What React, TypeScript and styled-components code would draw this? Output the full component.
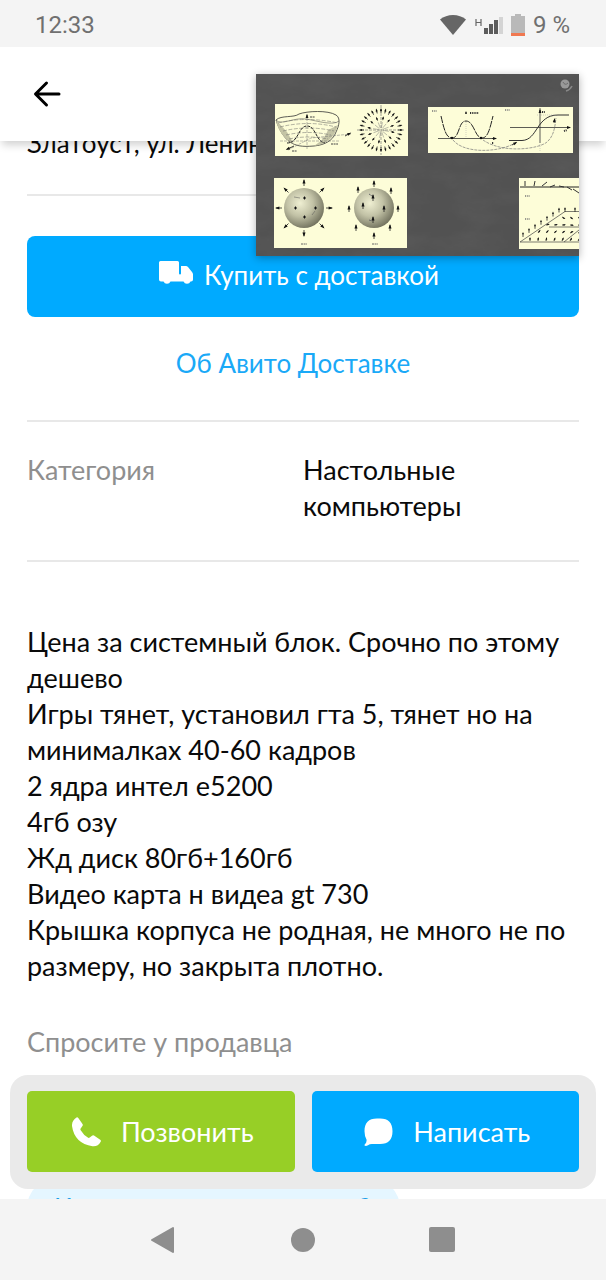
import React from "react";
import styled, { createGlobalStyle } from "styled-components";

const BLUE = "#00aaff";
const GREEN = "#97cf26";

const GlobalStyle = createGlobalStyle`
  *, *::before, *::after { box-sizing: border-box; }
  body {
    margin: 0;
    background: #fff;
    color: #0a0a0a;
    font: 400 27px/36px Lato, "Open Sans", sans-serif;
  }
  h2, p, dl, dt, dd { margin: 0; font: inherit; }
  button { border: 0; padding: 0; background: none; font: inherit; color: inherit; cursor: pointer; }
  svg { display: block; flex: none; }
`;

const Screen = styled.div`
  position: relative;
  display: flex;
  flex-direction: column;
  height: 100vh;
  overflow: hidden;
`;

const StatusBar = styled.div`
  display: flex;
  align-items: center;
  justify-content: space-between;
  height: 47px;
  flex: none;
  padding: 2px 36px 0 35px;
  background: #f4f4f4;
  color: #707070;
  font: 400 24px/28px Roboto, sans-serif;
`;

const StatusIcons = styled.div`
  display: flex;
  align-items: center;
  gap: 8px;
`;

const Header = styled.header`
  position: relative;
  z-index: 1;
  display: flex;
  align-items: center;
  height: 94px;
  flex: none;
  padding: 0 33px;
  background: #fff;
  box-shadow: 0 6px 8px -2px rgba(0, 0, 0, 0.18);
`;

const Main = styled.main`
  position: relative;
  flex: 1;
  min-height: 0;
  overflow: hidden;
`;

const Listing = styled.div`
  display: flex;
  flex-direction: column;
  margin-top: -16px;
  padding: 0 27px;
`;

const Section = styled.section<{ $top?: number; $bottom?: number }>`
  display: flex;
  flex-direction: column;
  padding: ${(p) => p.$top ?? 0}px 0 ${(p) => p.$bottom ?? 0}px;
  border-bottom: 2px solid #e8e8e8;
  &:last-child { border-bottom: 0; }
`;

const Address = styled.p`
  && { font-size: 26px; }
`;

const DeliveryButton = styled.button`
  display: flex;
  align-items: center;
  justify-content: center;
  gap: 11px;
  height: 81px;
  padding: 0 8px 4px 0;
  border-radius: 8px;
  background: ${BLUE};
  color: #fff;
  && { font-size: 26px; }
`;

const TruckIcon = styled.svg`
  margin-bottom: 3px;
`;

const DeliveryLink = styled.a`
  align-self: center;
  margin: 28px 20px 0 0;
  color: #1aa9f7;
  font-size: 26px;
  text-decoration: none;
`;

const Specs = styled.dl`
  display: grid;
  grid-template-columns: 1fr 1fr;
`;

const SpecName = styled.dt`
  color: #8f8f8f;
`;

const SpecValue = styled.dd`
  max-width: 200px;
`;

const Description = styled.p`
  white-space: pre-line;
`;

const AskTitle = styled.h2`
  margin-top: 40px;
  color: #8f8f8f;
`;

const QuestionChip = styled.button`
  align-self: flex-start;
  margin-top: 118px;
  height: 60px;
  padding: 0 29px 0 27px;
  border-radius: 30px;
  background: #e5f6ff;
  color: #1a9fe8;
  white-space: nowrap;
  && { font-size: 26px; }
`;

const ActionBar = styled.div`
  position: absolute;
  left: 10px;
  right: 10px;
  bottom: 10px;
  display: flex;
  gap: 17px;
  padding: 16px 17px 17px;
  border-radius: 18px;
  background: #eaeaea;
`;

const ActionButton = styled.button<{ $color: string }>`
  flex: 1;
  display: flex;
  align-items: center;
  justify-content: center;
  gap: 20px;
  height: 81px;
  padding-left: 4px;
  border-radius: 5px;
  background: ${(p) => p.$color};
  color: #fff;
`;

const NavBar = styled.nav`
  display: flex;
  align-items: center;
  justify-content: center;
  gap: 113px;
  height: 81px;
  flex: none;
  background: #f4f4f4;
`;

const FloatingPlayer = styled.div`
  position: absolute;
  z-index: 2;
  top: 74px;
  right: 27px;
  background: #4b4b4b;
  box-shadow: 0 2px 8px rgba(0, 0, 0, 0.3);
`;

type ArrowProps = { x: number; y: number; angle: number; length: number; head?: number };

/** Arrow that ends at a tip `length` away from its tail. */
function Arrow({ x, y, angle, length, head = 2 }: ArrowProps) {
  return (
    <g transform={`translate(${x} ${y}) rotate(${angle})`}>
      <path d={`M0 0H${length}`} stroke="#222" strokeWidth="0.8" />
      <path d={`M${length + 1} 0l${-head * 2} ${-head * 0.7}v${head * 1.4}z`} fill="#111" />
    </g>
  );
}

function RadialField() {
  const rays = Array.from({ length: 28 }, (_, i) => (i * 360) / 28);
  const inner = Array.from({ length: 12 }, (_, i) => i * 30 + 10);
  const at = (a: number, r: number) => ({
    x: 125 + r * Math.cos((a * Math.PI) / 180),
    y: 56 + r * Math.sin((a * Math.PI) / 180),
  });
  return (
    <g>
      <path d="M125 31V81M101 56H149" stroke="#666" strokeWidth="0.6" strokeDasharray="3 1" />
      {rays.map((a) => (
        <Arrow key={a} {...at(a, 17)} angle={a} length={4} head={1.5} />
      ))}
      {inner.map((a) => (
        <Arrow key={a} {...at(a, 10)} angle={a} length={3} head={1.4} />
      ))}
      {inner.map((a) => (
        <path
          key={a}
          d={`M${at(a, 2).x} ${at(a, 2).y}L${at(a, 8).x} ${at(a, 8).y}`}
          stroke="#777"
          strokeWidth="0.5"
        />
      ))}
    </g>
  );
}

function Lecture() {
  const lattice: [number, number, number][] = [];
  for (let row = 0; row < 4; row++) {
    for (let col = 0; col < 7; col++) {
      const x = 274 + col * 8;
      const y = 167 - row * 8;
      if (x < 323 && y > 168 - (x - 264) * 0.66) lattice.push([x, y, -90 + row * 32 + col * 6]);
    }
  }
  return (
    <svg width="323" height="182" viewBox="0 0 323 182" fill="none" role="img" aria-label="Видео">
      <defs>
        <radialGradient id="ball" cx="0.4" cy="0.38" r="0.65">
          <stop offset="0" stopColor="#efefd2" />
          <stop offset="0.5" stopColor="#c2c2a6" />
          <stop offset="1" stopColor="#73735f" />
        </radialGradient>
        <filter id="chalk" x="0" y="0" width="1" height="1">
          <feTurbulence type="fractalNoise" baseFrequency="0.025 0.05" numOctaves="4" seed="8" />
          <feColorMatrix values="0 0 0 0 0.1  0 0 0 0 0.1  0 0 0 0 0.1  1.6 0 0 0 -0.6" />
        </filter>
      </defs>
      <rect width="323" height="182" fill="#525252" />
      <rect width="323" height="182" filter="url(#chalk)" />

      <circle cx="309" cy="10" r="4.500" fill="#999" />
      <path d="M307 8q2 4 5 1" stroke="#6c6c6c" />
      <path d="M310 17q4-1 6-5" stroke="#888" strokeWidth="1.500" />

      <path
        fill="#fdfdd8"
        d="M19 30H152V82H19ZM18 104H151V174H18ZM172 33H317V79H172ZM263 104H323V175H263Z"
      />

      {/* potential surface */}
      <path
        d="M20 46C25 41 38 44 43 40C51 37 72 36 80 41C85 44 83 52 80 58C77 67 68 71 58 72C46 73 40 72 34 68C27 63 23 55 20 46Z"
        stroke="#333"
        strokeWidth="0.8"
      />
      <path d="M20 46C22 57 28 65 38 70L31 58ZM82 51C78 65 70 70 58 72Q69 65 72 56Z" fill="#c4c4a5" />
      <path d="M20 46C25 52 38 43 50 45C62 47 77 52 83 47" stroke="#444" strokeWidth="0.5" />
      <path
        d="M22 49Q50 42 82 49M24 53Q52 46 80 53M27 57Q52 51 78 57M30 61Q52 56 75 61M33 65Q52 61 72 65"
        stroke="#666"
        strokeWidth="0.5"
        strokeDasharray="4 1.5"
      />
      <path d="M31 69C43 69 42 52 51 52S60 68 69 69" stroke="#222" strokeDasharray="3 1" />
      <path d="M51 75V40M24 67H84M32 76L55 64L95 60" stroke="#777" strokeWidth="0.5" strokeDasharray="3 1" />
      <path d="M36 77h5M75 70h7M54 43h5" stroke="#444" strokeDasharray="2 0.6" />
      <Arrow x={51} y={44} angle={-90} length={3} />
      <Arrow x={38} y={72} angle={155} length={8} />
      <Arrow x={89} y={62} angle={-28} length={6} />
      <RadialField />

      {/* vector fields on spheres */}
      <circle cx="48" cy="134" r="20" fill="url(#ball)" />
      {Array.from({ length: 8 }, (_, i) => i * 45).map((a) => (
        <Arrow
          key={a}
          x={48 + 22 * Math.cos((a * Math.PI) / 180)}
          y={134 + 22 * Math.sin((a * Math.PI) / 180)}
          angle={a}
          length={6}
          head={2.2}
        />
      ))}
      <path
        d="M47 124h3M48.500 122.500v3M38 134h3M39.500 132.500v3M58 134h3M59.500 132.500v3M47 143h3M48.500 141.500v3"
        stroke="#111"
      />
      <path d="M38 123l6 1M56 141l3-4" stroke="#555" strokeWidth="0.5" />
      <circle cx="118" cy="134" r="20" fill="url(#ball)" />
      {[
        [118, 113], [102, 119], [135, 120], [93, 138], [142, 138], [100, 157], [134, 157],
        [118, 165], [117, 127], [107, 135], [128, 138], [117, 149],
      ].map(([x, y]) => (
        <Arrow key={`${x}-${y}`} x={x} y={y} angle={-90} length={6} head={2.2} />
      ))}
      <path d="M45 170h6M116 170h6M113 120l3 2M113 146l3 1" stroke="#666" strokeDasharray="2 0.6" />

      {/* double well and transfer curve */}
      <path d="M182 64.500H239M254 53.500H314M284 34V69" stroke="#333" strokeWidth="0.8" />
      <path
        d="M185 42C188 55 190 64 196 64C204 64 202 47 210 47S219 64 226 64C232 64 234 54 237 42"
        stroke="#222"
        strokeDasharray="7 1"
      />
      <path d="M253 66.500H266C282 66 280 41 302 41H313" stroke="#333" />
      <path
        d="M197 66C208 80 244 79 261 68M227 66C247 80 283 75 291 68C299 61 299 50 300 44"
        stroke="#777"
        strokeWidth="0.7"
        strokeDasharray="3 1"
      />
      <path d="M210 48V64M281 41H300M284 62V77" stroke="#aaa" strokeWidth="0.5" strokeDasharray="1 1" />
      <path d="M176 37h5M249 36h5" stroke="#777" strokeWidth="1.500" strokeDasharray="1 0.800" />
      <path d="M214 39h9M286 38h3M236 69h2M308 57l3-1" stroke="#333" strokeWidth="2" strokeDasharray="1 0.800" />
      <Arrow x={210} y={40} angle={-90} length={2} head={1.4} />
      <Arrow x={284} y={39} angle={-90} length={3} />
      <Arrow x={298} y={49} angle={-80} length={4} />
      <Arrow x={256} y={71} angle={-30} length={5} />
      <Arrow x={236} y={64.5} angle={0} length={4} />
      <Arrow x={311} y={53.5} angle={0} length={3} />
      <circle cx="196" cy="64" r="1.200" fill="#111" />
      <circle cx="225" cy="64" r="1.200" fill="#111" />

      {/* domain wall */}
      <path d="M264 113H323" stroke="#222" />
      <path d="M269 107v5M278 112l1-5M286 112l5-4M294 113l5-2M303 112l5 1M311 113l5 3M317 115l6 4" stroke="#333" />
      <path d="M269 122h5M269 145h5" stroke="#777" strokeWidth="1.500" strokeDasharray="1 0.800" />
      <path d="M264 168L309 137.500H323M293 153H323M264 168H323M308 168L323 156" stroke="#444" strokeWidth="0.7" />
      {[267, 273, 279, 285, 291, 297, 303, 309, 319].map((x) => (
        <Arrow key={x} x={x} y={Math.max(138, 165 - (x - 264) * 0.68)} angle={-90} length={4} head={1.2} />
      ))}
      {lattice.map(([x, y, a]) => (
        <Arrow key={`${x}-${y}`} x={x} y={y} angle={a} length={3} head={1.3} />
      ))}
    </svg>
  );
}

const description = `Цена за системный блок. Срочно по этому дешево
Игры тянет, установил гта 5, тянет но на минималках 40-60 кадров
2 ядра интел е5200
4гб озу
Жд диск 80гб+160гб
Видео карта н видеа gt 730
Крышка корпуса не родная, не много не по размеру, но закрыта плотно.`;

export default function App() {
  return (
    <Screen>
      <GlobalStyle />
      <StatusBar>
        <span>12:33</span>
        <StatusIcons>
          <svg width="26" height="20" viewBox="0 0 26 20">
            <path d="M0 4.500C7-1.500 19-1.500 26 4.500L13 20Z" fill="#666" />
          </svg>
          <svg width="29" height="18" viewBox="0 0 29 18" fill="#5c5c5c">
            <path d="M2 3v7M7 3v7M2 6.500h5" stroke="#666" strokeWidth="1.200" fill="none" />
            <path d="M10 12h4v6h-4zM15 8h4v10h-4zM20 4h4v14h-4z" />
            <path d="M25 1h4v17h-4z" fill="#d4d4d4" />
          </svg>
          <svg width="14" height="22" viewBox="0 0 14 22">
            <path d="M4 0h6v2h4v17H0V2h4z" fill="#b9b9b9" />
            <path d="M0 19h14v3H0z" fill="#f07850" />
          </svg>
          <span>9 %</span>
        </StatusIcons>
      </StatusBar>

      <Header>
        <button type="button" aria-label="Назад">
          <svg width="28" height="28" viewBox="0 0 28 28" fill="none" stroke="#000" strokeWidth="3" strokeLinecap="round" strokeLinejoin="round">
            <path d="M26 14H3M13.500 3L2.500 14L13.500 25" />
          </svg>
        </button>
      </Header>

      <Main>
        <Listing>
          <Section $bottom={33}>
            <Address>Златоуст, ул. Ленина</Address>
          </Section>

          <Section $top={40} $bottom={39}>
            <DeliveryButton type="button">
              <TruckIcon width="34" height="24" viewBox="0 0 34 24" fill="#fff">
                <path d="M1.500 0H18.500Q20 0 20 1.500V12.500Q20 13.500 21 13.500Q22 13.500 22 12.500V5H27Q28 5 29 6L33 11Q34 12 34 13.500V18.500Q34 20.500 32 20.500H31.500A3.800 3.800 0 0 1 24.500 20.500H11.500A3.800 3.800 0 0 1 4.500 20.500H2Q0 20.500 0 18.500V1.500Q0 0 1.500 0Z" />
              </TruckIcon>
              Купить с доставкой
            </DeliveryButton>
            <DeliveryLink href="#delivery">Об Авито Доставке</DeliveryLink>
          </Section>

          <Section $top={30} $bottom={36}>
            <Specs>
              <SpecName>Категория</SpecName>
              <SpecValue>Настольные компьютеры</SpecValue>
            </Specs>
          </Section>

          <Section $top={62}>
            <Description>{description}</Description>
            <AskTitle>Спросите у продавца</AskTitle>
            <QuestionChip type="button">Когда можно посмотреть?</QuestionChip>
          </Section>
        </Listing>

        <ActionBar>
          <ActionButton type="button" $color={GREEN}>
            <svg width="29" height="30" viewBox="0 0 29 30" fill="#fff">
              <path d="M4.500 .5Q5.500 0 6.300 1L10.500 7Q11.200 8 10.400 9L8.500 11.800Q8.200 12.500 8.700 13.200Q11.500 18 16.200 20.800Q17 21.200 17.700 20.600L20 18.700Q21 18 22 18.600L28.200 22.800Q29.300 23.600 28.700 24.700Q26 29.800 20.500 29.200Q2.500 26.500 0 9Q-.3 3.500 4.500 .5Z" />
            </svg>
            Позвонить
          </ActionButton>
          <ActionButton type="button" $color={BLUE}>
            <svg width="29" height="28" viewBox="0 0 29 28" fill="#fff">
              <path d="M13 .5H16C24.500 .5 28.500 5 28.500 13.200S24.500 26 16 26H9.500Q6 25.500 4 27.200Q2 28.500 .6 27.600Q0 27 1 26.200Q3 24 2.500 21.500Q.5 18 .5 13.200C.5 5 4.500 .5 13 .5Z" />
            </svg>
            Написать
          </ActionButton>
        </ActionBar>
      </Main>

      <NavBar>
        <button type="button" aria-label="Назад">
          <svg width="26" height="28" viewBox="0 0 26 28" fill="#8e8e8e" stroke="#8e8e8e" strokeWidth="2" strokeLinejoin="round">
            <path d="M1 14L22 2V26Z" />
          </svg>
        </button>
        <button type="button" aria-label="Домой">
          <svg width="26" height="26" viewBox="0 0 26 26" fill="#8e8e8e">
            <circle cx="13" cy="13" r="12" />
          </svg>
        </button>
        <button type="button" aria-label="Недавние">
          <svg width="26" height="26" viewBox="0 0 26 26" fill="#8e8e8e">
            <rect width="26" height="25" rx="2" />
          </svg>
        </button>
      </NavBar>

      <FloatingPlayer>
        <Lecture />
      </FloatingPlayer>
    </Screen>
  );
}
